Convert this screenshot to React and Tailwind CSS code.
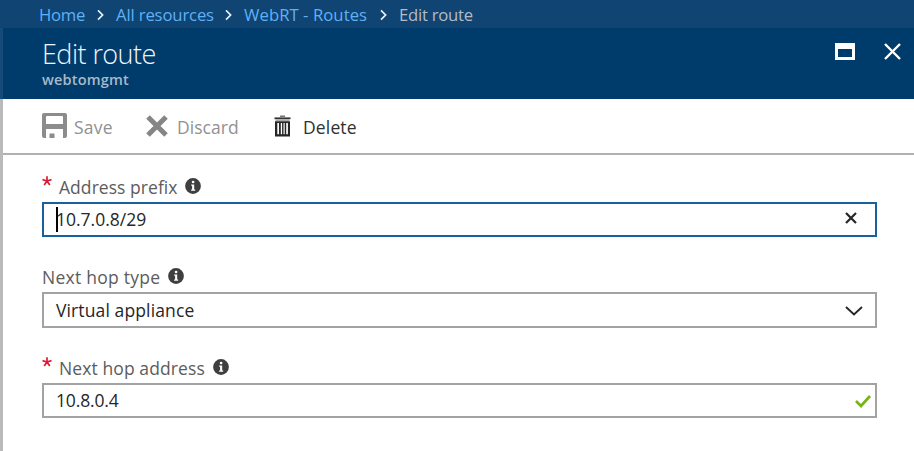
function Chevron() {
  return (
    <svg className="block h-[28px] w-[7px] shrink-0" viewBox="0 0 7 28" fill="none" stroke="#e8f0f7" strokeWidth="1.7">
      <path d="M1 9.4 L5.6 14 L1 18.6" />
    </svg>
  );
}

function Info() {
  return (
    <svg className="block size-4 shrink-0" viewBox="0 0 16 16">
      <circle cx="8" cy="8" r="7.9" fill="#3f3f3f" />
      <circle cx="8.1" cy="4" r="1.35" fill="#fff" />
      <path d="M6.2 6.4h3v5h1v1.4H6.1v-1.4h1v-3.6h-.9z" fill="#fff" />
    </svg>
  );
}

function Asterisk() {
  return (
    <svg className="-mt-[2px] mr-[7px] block size-[10px] shrink-0" viewBox="0 0 10 10" stroke="#dc1a35" strokeWidth="1.7">
      <path d="M5 5V.3M5 5L.5 3.6M5 5l4.5-1.4M5 5L2.2 9M5 5l2.8 4" />
    </svg>
  );
}

function Label({ children, required, className }) {
  return (
    <div className="flex h-6 items-start">
      {required && <Asterisk />}
      <span className={"-mt-[3px] shrink-0 whitespace-nowrap text-[17.5px] leading-6 text-[#5c5c5c] " + className}>{children}</span>
      <Info />
    </div>
  );
}

export default function App() {
  return (
    <div className="flex h-[451px] w-[914px] flex-col overflow-hidden bg-white font-['Open_Sans','Noto_Sans',sans-serif]">
      <nav className="flex h-[28px] shrink-0 items-center bg-[#104472] pl-[39px] pt-[2px] text-[16.7px] leading-[26px] whitespace-nowrap text-[#5fb1f7]">
        <span className="w-[58px] tracking-[-0.25px]">Home</span>
        <Chevron />
        <span className="ml-[12px] w-[109px] tracking-[-0.15px]">All resources</span>
        <Chevron />
        <span className="ml-[12px] w-[136px] tracking-[0.05px]">WebRT - Routes</span>
        <Chevron />
        <span className="ml-[12px] tracking-[-0.25px] text-[#b3bcc5]">Edit route</span>
      </nav>
      <header className="flex h-[71px] shrink-0 border-l-[3px] border-[#164a78] bg-[#003c6b] pl-[39px]">
        <div className="flex-1 whitespace-nowrap">
          <h1 className="pt-[10px] text-[27px] leading-[32px] font-light tracking-[-0.55px] text-[#eef5fa]">Edit route</h1>
          <p className="text-[14.5px] leading-[20px] font-semibold tracking-[0.2px] text-[#a9b9c8]">webtomgmt</p>
        </div>
        <svg className="mt-[15px] mr-[29px] block h-[17px] w-[20px]" viewBox="0 0 20 17">
          <path fillRule="evenodd" fill="#fff" d="M0 0h20v17H0zM3 6v8h14V6z" />
        </svg>
        <svg className="mt-[15px] mr-[13px] block size-[17px]" viewBox="0 0 17 17" stroke="#fff" strokeWidth="2.4">
          <path d="M1 1l15 15M16 1L1 16" />
        </svg>
      </header>
      <main className="flex-1 border-l-[3px] border-[#bababa]">
        <div className="flex h-[56px] items-center border-b-2 border-[#b0b0b0] pl-[39px] text-[17.5px] leading-6 whitespace-nowrap text-[#919191]">
          <svg className="-mt-px block size-[25px]" viewBox="0 0 25 25">
            <path fill="#8c8c8c" fillRule="evenodd" d="M2 0h21q2 0 2 2v21q0 2-2 2h-2v-9H4v9H2q-2 0-2-2V2q0-2 2-2zM5 3q-1 0-1 1v7h17V4q0-1-1-1z" />
            <path fill="#8c8c8c" d="M7.5 20.5h5V25h-5z" />
          </svg>
          <span className="mt-[2px] ml-[7px] w-[72px] tracking-[0.2px]">Save</span>
          <svg className="block h-[22px] w-[22px]" viewBox="0 0 22 22" stroke="#858585" strokeWidth="5">
            <path d="M2 2l18 18M20 2L2 20" />
          </svg>
          <span className="mt-[2px] ml-[9px] w-[97px] tracking-[0.05px]">Discard</span>
          <svg className="block h-[22px] w-[17px]" viewBox="0 0 17 22">
            <path fill="#777" d="M6 .5h5v1.5H6z" />
            <path fill="#333" d="M.5 2.4h16v1.8H.5z" />
            <path fill="#aaa" d="M1.5 4.2h14v1.8h-14z" />
            <path fill="#262626" fillRule="evenodd" d="M1 6.3h15V21.5H1zM3.3 8v11.2H5V8zM6.8 8v11.2h1.3V8zM9.5 8v11.2h1.2V8zM12.2 8v11.2h1.7V8z" />
          </svg>
          <span className="mt-[2px] ml-[12px] tracking-[0.15px] text-[#303030]">Delete</span>
        </div>
        <form className="flex w-[874px] flex-col pl-[39px] pt-[23px]">
          <Label required className="w-[126px] tracking-[0.05px]">Address prefix</Label>
          <div className="flex h-[35px] items-center border-2 border-[#19609f] pr-[18px] pl-[12px] text-[17.5px] text-[#262626]">
            <span className="-mt-px h-[25px] w-[1.5px] bg-black" />
            <span className="-ml-[1.5px] -mt-[2px] flex-1 leading-6">10.7.0.8/29</span>
            <svg className="-mt-[3px] block size-[12px]" viewBox="0 0 12 12" stroke="#262626" strokeWidth="2.2">
              <path d="M1 1l10 10M11 1L1 11" />
            </svg>
          </div>
          <div className="h-[31px]" />
          <Label className="w-[126px] tracking-[0.25px]">Next hop type</Label>
          <div className="flex h-[36px] items-center border-2 border-[#a3a3a3] pr-[12px] pl-[12px] text-[17.5px] text-[#262626]">
            <span className="flex-1 leading-6 tracking-[0.12px]">Virtual appliance</span>
            <svg className="mt-px block h-[10px] w-[18px]" viewBox="0 0 18 10" fill="none" stroke="#262626" strokeWidth="1.9">
              <path d="M1 1l8 7.5L17 1" />
            </svg>
          </div>
          <div className="h-[31px]" />
          <Label required className="w-[154px] tracking-[0.1px]">Next hop address</Label>
          <div className="flex h-[35px] items-center border-2 border-[#a3a3a3] pr-[4px] pl-[12px] text-[17.5px] text-[#262626]">
            <span className="-mt-px flex-1 leading-6 tracking-[-0.15px]">10.8.0.4</span>
            <svg className="mt-px block h-[13px] w-[16px]" viewBox="0 0 16 13" fill="none" stroke="#77b414" strokeWidth="2.7">
              <path d="M1 6l5 5L15 1" />
            </svg>
          </div>
        </form>
      </main>
    </div>
  );
}
